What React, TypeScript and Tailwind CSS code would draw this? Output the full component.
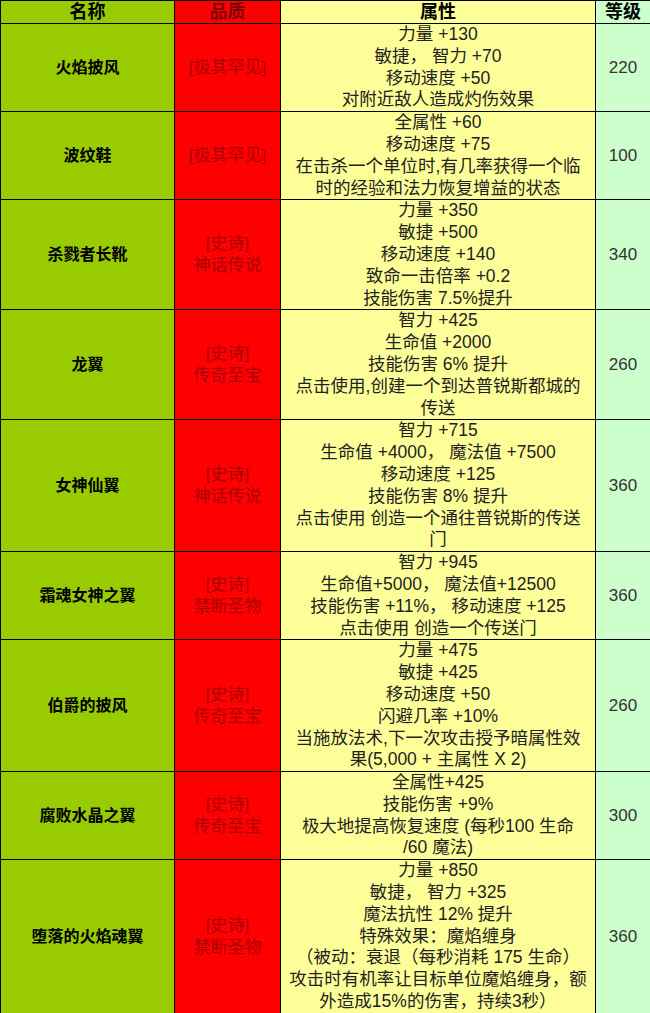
type Item = {
  name: string;
  quality: string[];
  attrs: string[];
  level: string;
};

const items: Item[] = [
  {
    name: '火焰披风',
    quality: ['[极其罕见]'],
    attrs: ['力量 +130', '敏捷， 智力 +70', '移动速度 +50', '对附近敌人造成灼伤效果'],
    level: '220',
  },
  {
    name: '波纹鞋',
    quality: ['[极其罕见]'],
    attrs: ['全属性 +60', '移动速度 +75', '在击杀一个单位时,有几率获得一个临', '时的经验和法力恢复增益的状态'],
    level: '100',
  },
  {
    name: '杀戮者长靴',
    quality: ['[史诗]', '神话传说'],
    attrs: ['力量 +350', '敏捷 +500', '移动速度 +140', '致命一击倍率 +0.2', '技能伤害 7.5%提升'],
    level: '340',
  },
  {
    name: '龙翼',
    quality: ['[史诗]', '传奇至宝'],
    attrs: ['智力 +425', '生命值 +2000', '技能伤害 6% 提升', '点击使用,创建一个到达普锐斯都城的', '传送'],
    level: '260',
  },
  {
    name: '女神仙翼',
    quality: ['[史诗]', '神话传说'],
    attrs: ['智力 +715', '生命值 +4000， 魔法值 +7500', '移动速度 +125', '技能伤害 8% 提升', '点击使用 创造一个通往普锐斯的传送', '门'],
    level: '360',
  },
  {
    name: '霜魂女神之翼',
    quality: ['[史诗]', '禁断圣物'],
    attrs: ['智力 +945', '生命值+5000， 魔法值+12500', '技能伤害 +11%， 移动速度 +125', '点击使用 创造一个传送门'],
    level: '360',
  },
  {
    name: '伯爵的披风',
    quality: ['[史诗]', '传奇至宝'],
    attrs: ['力量 +475', '敏捷 +425', '移动速度 +50', '闪避几率 +10%', '当施放法术,下一次攻击授予暗属性效', '果(5,000 + 主属性 X 2)'],
    level: '260',
  },
  {
    name: '腐败水晶之翼',
    quality: ['[史诗]', '传奇至宝'],
    attrs: ['全属性+425', '技能伤害 +9%', '极大地提高恢复速度 (每秒100 生命', '/60 魔法)'],
    level: '300',
  },
  {
    name: '堕落的火焰魂翼',
    quality: ['[史诗]', '禁断圣物'],
    attrs: [
      '力量 +850',
      '敏捷， 智力 +325',
      '魔法抗性 12% 提升',
      '特殊效果：魔焰缠身',
      '（被动：衰退（每秒消耗 175 生命）',
      '攻击时有机率让目标单位魔焰缠身，额',
      '外造成15%的伤害，持续3秒）',
    ],
    level: '360',
  },
];

const font = 'font-["Liberation_Sans","Noto_Sans_CJK_SC",sans-serif]';

export default function App() {
  return (
    <div className={`w-[650px] bg-white ${font}`}>
      <table className="w-full table-fixed border-collapse">
        <colgroup>
          <col className="w-[174px]" />
          <col className="w-[106px]" />
          <col className="w-[315px]" />
          <col className="w-[55px]" />
        </colgroup>
        <thead>
          <tr className="h-[23px] text-[18px] font-bold leading-[21px]">
            <th className="border border-black bg-[#99cc00] text-black">名称</th>
            <th className="border border-black bg-[#ff0000] text-[#800000]">品质</th>
            <th className="border border-black bg-[#ffff99] text-black">属性</th>
            <th className="border border-black bg-[#ccffcc] text-black">等级</th>
          </tr>
        </thead>
        <tbody>
          {items.map((item) => (
            <tr key={item.name}>
              <td className="border border-black bg-[#99cc00] p-0 text-center align-middle text-[16px] font-bold leading-[21.8px] text-black">
                {item.name}
              </td>
              <td className="border border-black bg-[#ff0000] p-0 text-center align-middle text-[17px] leading-[21.8px] text-[#a80000]">
                {item.quality.map((q) => (
                  <div key={q}>{q}</div>
                ))}
              </td>
              <td className="border border-black bg-[#ffff99] p-0 text-center align-middle text-[17.5px] leading-[21.8px] text-[#222]">
                {item.attrs.map((a, i) => (
                  <div key={i} className="whitespace-pre">
                    {a}
                  </div>
                ))}
              </td>
              <td className="border border-black bg-[#ccffcc] p-0 text-center align-middle text-[17px] leading-[21.8px] text-[#333]">
                {item.level}
              </td>
            </tr>
          ))}
        </tbody>
      </table>
    </div>
  );
}
